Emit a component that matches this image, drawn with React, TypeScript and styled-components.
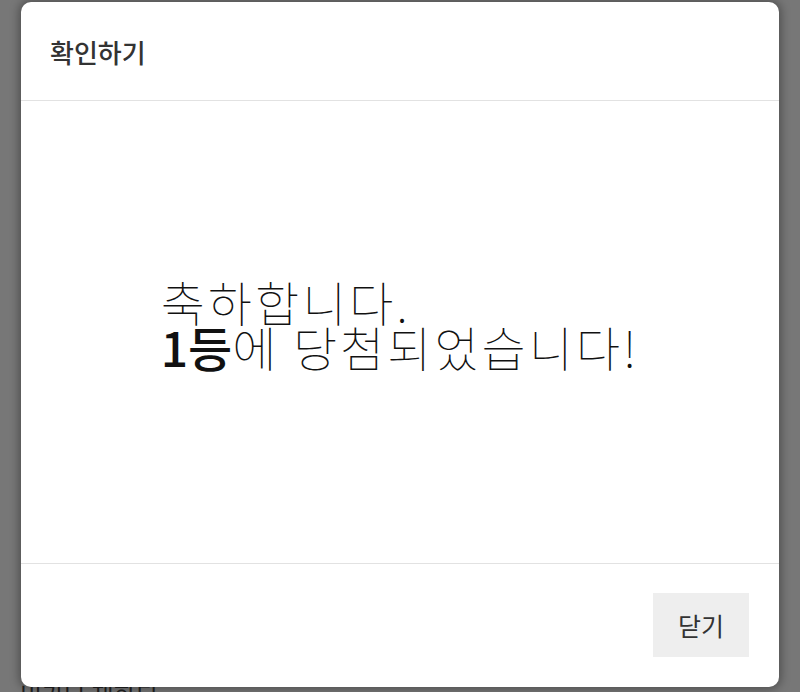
import React from "react";
import styled, { createGlobalStyle } from "styled-components";

const Global = createGlobalStyle`
  html, body { margin: 0; padding: 0; height: 100%; }
  body {
    background: #777777;
    font-family: "Noto Sans CJK KR", "Noto Sans", sans-serif;
    overflow: hidden;
  }
`;

const Backdrop = styled.div`
  position: relative;
  width: 800px;
  height: 692px;
  background: #777777;
  overflow: hidden;
`;

const BehindText = styled.div`
  position: absolute;
  left: 20px;
  top: 676px;
  font-size: 24px;
  color: #222;
  font-family: "Noto Sans CJK KR", sans-serif;
`;

const Modal = styled.div`
  position: absolute;
  left: 21px;
  top: 2px;
  width: 758px;
  height: 685px;
  background: #ffffff;
  border-radius: 10px;
  box-shadow: 0 0 10px 2px rgba(0, 0, 0, 0.35);
  display: flex;
  flex-direction: column;
  overflow: hidden;
`;

const Header = styled.div`
  height: 99px;
  box-sizing: border-box;
  padding: 0 29px;
  display: flex;
  align-items: center;
  border-bottom: 1px solid #e2e2e2;
`;

const Title = styled.h2`
  margin: 0;
  font-size: 26px;
  font-weight: 500;
  color: #333333;
`;

const Body = styled.div`
  flex: 1;
  display: flex;
  align-items: center;
  justify-content: center;
  padding-bottom: 16px;
`;

const Message = styled.p`
  margin: 0;
  text-align: left;
  font-size: 48px;
  line-height: 45px;
  font-weight: 100;
  color: #111111;
  letter-spacing: 3px;
`;

const Strong = styled.b`
  font-weight: 500;
  letter-spacing: 0;
`;

const Footer = styled.div`
  height: 124px;
  box-sizing: border-box;
  border-top: 1px solid #e2e2e2;
  padding: 29px 30px 31px;
  display: flex;
  justify-content: flex-end;
  align-items: center;
`;

const CloseButton = styled.button`
  width: 96px;
  height: 64px;
  border: none;
  background: #eeeeee;
  color: #333333;
  font-family: "Noto Sans CJK KR", sans-serif;
  font-size: 25px;
  font-weight: 400;
  cursor: pointer;
`;

export default function App() {
  return (
    <>
      <Global />
      <Backdrop>
        <BehindText>비가나 재화되</BehindText>
        <Modal>
          <Header>
            <Title>확인하기</Title>
          </Header>
          <Body>
            <Message>
              축하합니다.
              <br />
              <Strong>1등</Strong>에 당첨되었습니다!
            </Message>
          </Body>
          <Footer>
            <CloseButton>닫기</CloseButton>
          </Footer>
        </Modal>
      </Backdrop>
    </>
  );
}
